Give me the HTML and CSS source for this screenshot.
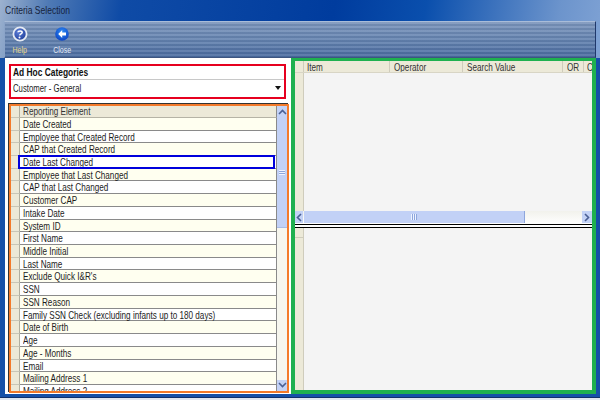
FILE: index.html
```html
<!DOCTYPE html>
<html lang="en">
<head>
<meta charset="utf-8">
<title>Criteria Selection</title>
<link rel="stylesheet" href="styles.css">
</head>
<body>
<div class="app">
  <div class="titlebar"><span class="t">Criteria Selection</span></div>
  <div class="window">
    <div class="toolbar">
      <div class="tool tool-help">
        <svg class="tool-icon" width="16" height="16" viewBox="0 0 16 16">
          <defs><radialGradient id="h" cx="0.4" cy="0.35" r="0.7"><stop offset="0" stop-color="#5f80d8"/><stop offset="1" stop-color="#1a3a98"/></radialGradient></defs>
          <circle cx="8" cy="8" r="6.6" fill="url(#h)" stroke="#e6ebf3" stroke-width="1.8"/>
          <path d="M5.9 6.2C6 4.6 10.2 4.4 10.2 6.4C10.2 7.8 8 7.8 7.6 9.4" fill="none" stroke="#fff" stroke-width="1.5"/>
          <circle cx="7.500" cy="11.500" r="1" fill="#fff"/>
        </svg>
        <span class="tool-label t-label">Help</span>
      </div>
      <div class="tool tool-close">
        <svg class="tool-icon" width="14" height="14" viewBox="0 0 14 14">
          <defs><radialGradient id="c" cx="0.5" cy="0.35" r="0.7"><stop offset="0" stop-color="#2f8cf5"/><stop offset="1" stop-color="#0a3fc0"/></radialGradient></defs>
          <circle cx="7" cy="7" r="6.8" fill="url(#c)"/>
          <path d="M7.2 3L3.2 7L7.2 11V8.6H11V5.4H7.2Z" fill="#fff"/>
        </svg>
        <span class="tool-label t-label">Close</span>
      </div>
    </div>
    <div class="main">
      <div class="left">
        <div class="categories">
          <div class="cat-title"><span class="t t-bold">Ad Hoc Categories</span></div>
          <div class="cat-select"><span class="t t-sel">Customer - General</span><span class="cat-arrow"></span></div>
        </div>
        <div class="elements">
          <div class="rows">
            <div class="row head"><div class="rh"></div><div class="cell"><span class="t">Reporting Element</span></div></div>
            <div class="row alt"><div class="rh"></div><div class="cell"><span class="t">Date Created</span></div></div>
            <div class="row"><div class="rh"></div><div class="cell"><span class="t">Employee that Created Record</span></div></div>
            <div class="row alt"><div class="rh"></div><div class="cell"><span class="t">CAP that Created Record</span></div></div>
            <div class="row"><div class="rh"></div><div class="cell selected"><span class="t">Date Last Changed</span></div></div>
            <div class="row alt"><div class="rh"></div><div class="cell"><span class="t">Employee that Last Changed</span></div></div>
            <div class="row"><div class="rh"></div><div class="cell"><span class="t">CAP that Last Changed</span></div></div>
            <div class="row alt"><div class="rh"></div><div class="cell"><span class="t">Customer CAP</span></div></div>
            <div class="row"><div class="rh"></div><div class="cell"><span class="t">Intake Date</span></div></div>
            <div class="row alt"><div class="rh"></div><div class="cell"><span class="t">System ID</span></div></div>
            <div class="row"><div class="rh"></div><div class="cell"><span class="t">First Name</span></div></div>
            <div class="row alt"><div class="rh"></div><div class="cell"><span class="t">Middle Initial</span></div></div>
            <div class="row"><div class="rh"></div><div class="cell"><span class="t">Last Name</span></div></div>
            <div class="row alt"><div class="rh"></div><div class="cell"><span class="t">Exclude Quick I&amp;R's</span></div></div>
            <div class="row"><div class="rh"></div><div class="cell"><span class="t">SSN</span></div></div>
            <div class="row alt"><div class="rh"></div><div class="cell"><span class="t">SSN Reason</span></div></div>
            <div class="row"><div class="rh"></div><div class="cell"><span class="t">Family SSN Check (excluding infants up to 180 days)</span></div></div>
            <div class="row alt"><div class="rh"></div><div class="cell"><span class="t">Date of Birth</span></div></div>
            <div class="row"><div class="rh"></div><div class="cell"><span class="t">Age</span></div></div>
            <div class="row alt"><div class="rh"></div><div class="cell"><span class="t">Age - Months</span></div></div>
            <div class="row"><div class="rh"></div><div class="cell"><span class="t">Email</span></div></div>
            <div class="row alt"><div class="rh"></div><div class="cell"><span class="t">Mailing Address 1</span></div></div>
            <div class="row"><div class="rh"></div><div class="cell"><span class="t">Mailing Address 2</span></div></div>
          </div>
          <div class="vscroll">
            <div class="sb-btn v-btn"><svg width="9" height="6" viewBox="0 0 9 6"><path d="M1 5L4.500 1.500L8 5" fill="none" stroke="#4a5f94" stroke-width="1.6"/></svg></div>
            <div class="v-thumb"><div class="v-grip"></div></div>
            <div class="v-track"></div>
            <div class="sb-btn v-btn"><svg width="9" height="6" viewBox="0 0 9 6"><path d="M1 1L4.500 4.500L8 1" fill="none" stroke="#4a5f94" stroke-width="1.6"/></svg></div>
          </div>
        </div>
      </div>
      <div class="right">
        <div class="pane-top">
          <div class="col-head">
            <div class="corner"></div>
            <div class="col col-item"><span class="t">Item</span></div>
            <div class="col col-op"><span class="t">Operator</span></div>
            <div class="col col-val"><span class="t">Search Value</span></div>
            <div class="col col-or"><span class="t">OR</span></div>
            <div class="col col-last"><span class="t">C</span></div>
          </div>
          <div class="grid-body"><div class="rh-col"></div><div class="grid-empty"></div></div>
          <div class="hscroll">
            <div class="sb-btn h-btn"><svg width="6" height="9" viewBox="0 0 6 9"><path d="M5 1L1.500 4.500L5 8" fill="none" stroke="#4a5f94" stroke-width="1.6"/></svg></div>
            <div class="h-thumb"><div class="h-grip"></div></div>
            <div class="h-track"></div>
            <div class="sb-btn h-btn h-btn-r"><svg width="6" height="9" viewBox="0 0 6 9"><path d="M1 1L4.500 4.500L1 8" fill="none" stroke="#4a5f94" stroke-width="1.6"/></svg></div>
          </div>
        </div>
        <div class="splitter"></div>
        <div class="pane-bottom">
          <div class="rh-col rh-col-split"><div class="rh-corner"></div></div>
          <div class="grid-empty"></div>
        </div>
      </div>
    </div>
  </div>
</div>
</body>
</html>
```
FILE: styles.css
```css
* { box-sizing: border-box; }
html, body { margin: 0; padding: 0; }
body { font-family: "Liberation Sans", Arial, sans-serif; font-size: 10.5px; color: #1c1c1c; }
.t { display: inline-block; transform: scaleX(.775); transform-origin: left center; white-space: nowrap; }
.t-bold { transform: scaleX(.80); }
.t-sel { transform: scaleX(.74); }
.t-label { transform: scaleX(.74); transform-origin: center center; }
.app {
  width: 600px; height: 400px; overflow: hidden;
  display: flex; flex-direction: column;
  background:
    linear-gradient(100deg, #9db2cf 0, #4f7ab5 8%, #0f4ba6 20%, #003c9e 55%, #0a4fad 70%, #6c94cc 92%, #7fa2d4 100%) top / 100% 58px no-repeat,
    linear-gradient(180deg, #1550a8 0 397px, #10306c 397px 398px, #dfe6f0 398px);
}
.titlebar { height: 21px; flex: none; padding: 3px 0 0 5px; line-height: 14px; font-size: 11px; color: #16233c; }
.window { flex: none; height: 373px; margin: 0 4px 0 4px; display: flex; flex-direction: column; }
.toolbar {
  height: 37px; flex: none; display: flex;
  border-top: 1px solid #a9bcd8; border-left: 1px solid #8ba4c8; border-right: 1px solid #20386a; border-bottom: 1px solid #3d5580;
  background:
    repeating-linear-gradient(180deg, rgba(255,255,255,.10) 0 2px, rgba(0,0,0,.05) 2px 4px),
    linear-gradient(180deg, #7a94bb 0, #6483b0 50%, #4a6ba0 100%);
}
.tool { display: flex; flex-direction: column; align-items: center; }
.tool-help { width: 30px; padding-top: 4px; }
.tool-close { width: 30px; margin-left: 12px; padding-top: 5px; }
.tool-icon { display: block; flex: none; }
.tool-label { font-size: 9.500px; line-height: 10px; margin-top: 3px; }
.tool-close .tool-label { color: #e2eaf6; margin-top: 4px; }
.tool-help .tool-label { color: #e6d78e; }
.main { flex: 1; min-height: 0; display: flex; background: #fff; }
.left { width: 287px; flex: none; padding: 6px 0 0 4px; border-left: 1px solid #1550a8; display: flex; flex-direction: column; }
.categories { width: 277px; height: 35px; border: 2px solid #e6001f; flex: none; }
.cat-title { height: 14px; line-height: 12px; padding-left: 2px; font-weight: bold; color: #111; border-bottom: 1px solid #c8c8c8; }
.cat-select { height: 15px; padding: 1px 3px 0 2px; line-height: 15px; display: flex; justify-content: space-between; align-items: center; }
.cat-arrow { width: 0; height: 0; border-left: 3.500px solid transparent; border-right: 3.500px solid transparent; border-top: 4px solid #111; }
.elements {
  width: 280px; height: 288.500px; margin-top: 5px; flex: none;
  border: 2px solid #f47a2a; box-shadow: -1px -1px 0 #333;
  display: flex; overflow: hidden; background: #fff;
}
.rows { width: 266px; flex: none; overflow: hidden; }
.row { display: flex; height: 12.730px; }
.row.head { height: 11.850px; }
.rh { width: 9px; flex: none; background: #ece9d8; border-right: 1px solid #b0aea0; border-bottom: 1px solid #c8c6b8; }
.cell {
  flex: 1; position: relative; padding: 1px 0 0 3px; line-height: 11.500px; white-space: nowrap;
  border-right: 1px solid #8a8a8a; border-bottom: 1px solid #8a8a8a; background: #fff;
}
.row.alt .cell { background: #fffff0; }
.row.head .cell { background: #ece9d8; border-bottom: 1px solid #b5b3a5; color: #333; border-right: 1px solid #8a8a8a; padding-top: 0; }
.cell.selected::after { content: ""; position: absolute; left: -2px; right: 1px; top: -1px; bottom: -1px; border: 2px solid #0000dc; }
.vscroll { width: 10px; flex: none; display: flex; flex-direction: column; background: #f6f6ee; }
.sb-btn { background: #c3d2f6; display: flex; align-items: center; justify-content: center; flex: none; }
.v-btn { height: 11px; }
.v-thumb { height: 111px; flex: none; background: #c2d1f6; border-bottom: 1px solid #a9bce6; display: flex; align-items: center; justify-content: center; }
.v-grip { width: 6px; height: 5px; background: repeating-linear-gradient(180deg, #eef3ff 0 1px, #8ea6dc 1px 2px); }
.v-track { flex: 1; }
.right {
  width: 305px; flex: none; height: 336px;
  border: 4px solid #1fb04f; border-top-width: 3px; background: #f4f4f4;
  display: flex; flex-direction: column;
}
.pane-top { height: 163px; flex: none; display: flex; flex-direction: column; }
.col-head { height: 12px; flex: none; display: flex; background: #ece9d8; border-bottom: 1px solid #d8d5c5; line-height: 12px; color: #333; }
.corner { width: 9px; flex: none; border-right: 1px solid #cfccbc; }
.col { padding-left: 4px; border-right: 1px solid #cfccbc; white-space: nowrap; overflow: hidden; flex: none; }
.col-item { width: 86px; padding-left: 3px; }
.col-op { width: 73px; }
.col-val { width: 100px; }
.col-or { width: 21px; }
.col-last { flex: 1; border-right: 0; padding-left: 3px; }
.grid-body { flex: 1; min-height: 0; display: flex; }
.rh-col { width: 9px; flex: none; background: #ece9d8; border-right: 1px solid #cfccbc; }
.grid-empty { flex: 1; background: #f4f4f4; }
.hscroll { height: 13px; flex: none; display: flex; background: linear-gradient(180deg, #f2f2ec, #fff); }
.h-btn { width: 8px; height: 12px; }
.h-btn-r { width: 10px; }
.h-thumb { width: 221px; height: 12px; margin-left: 1px; background: #c2d1f6; border-right: 1px solid #8ea6dc; display: flex; align-items: center; justify-content: center; flex: none; }
.h-grip { width: 6px; height: 6px; background: repeating-linear-gradient(90deg, #eef3ff 0 1px, #8ea6dc 1px 2px); }
.h-track { flex: 1; }
.splitter { height: 4px; flex: none; background: #fff; border-top: 1px solid #000; border-bottom: 1px solid #000; }
.pane-bottom { flex: 1; min-height: 0; display: flex; }
.rh-col-split { display: block; }
.rh-corner { height: 10px; border-bottom: 1px solid #cfccbc; }
```
